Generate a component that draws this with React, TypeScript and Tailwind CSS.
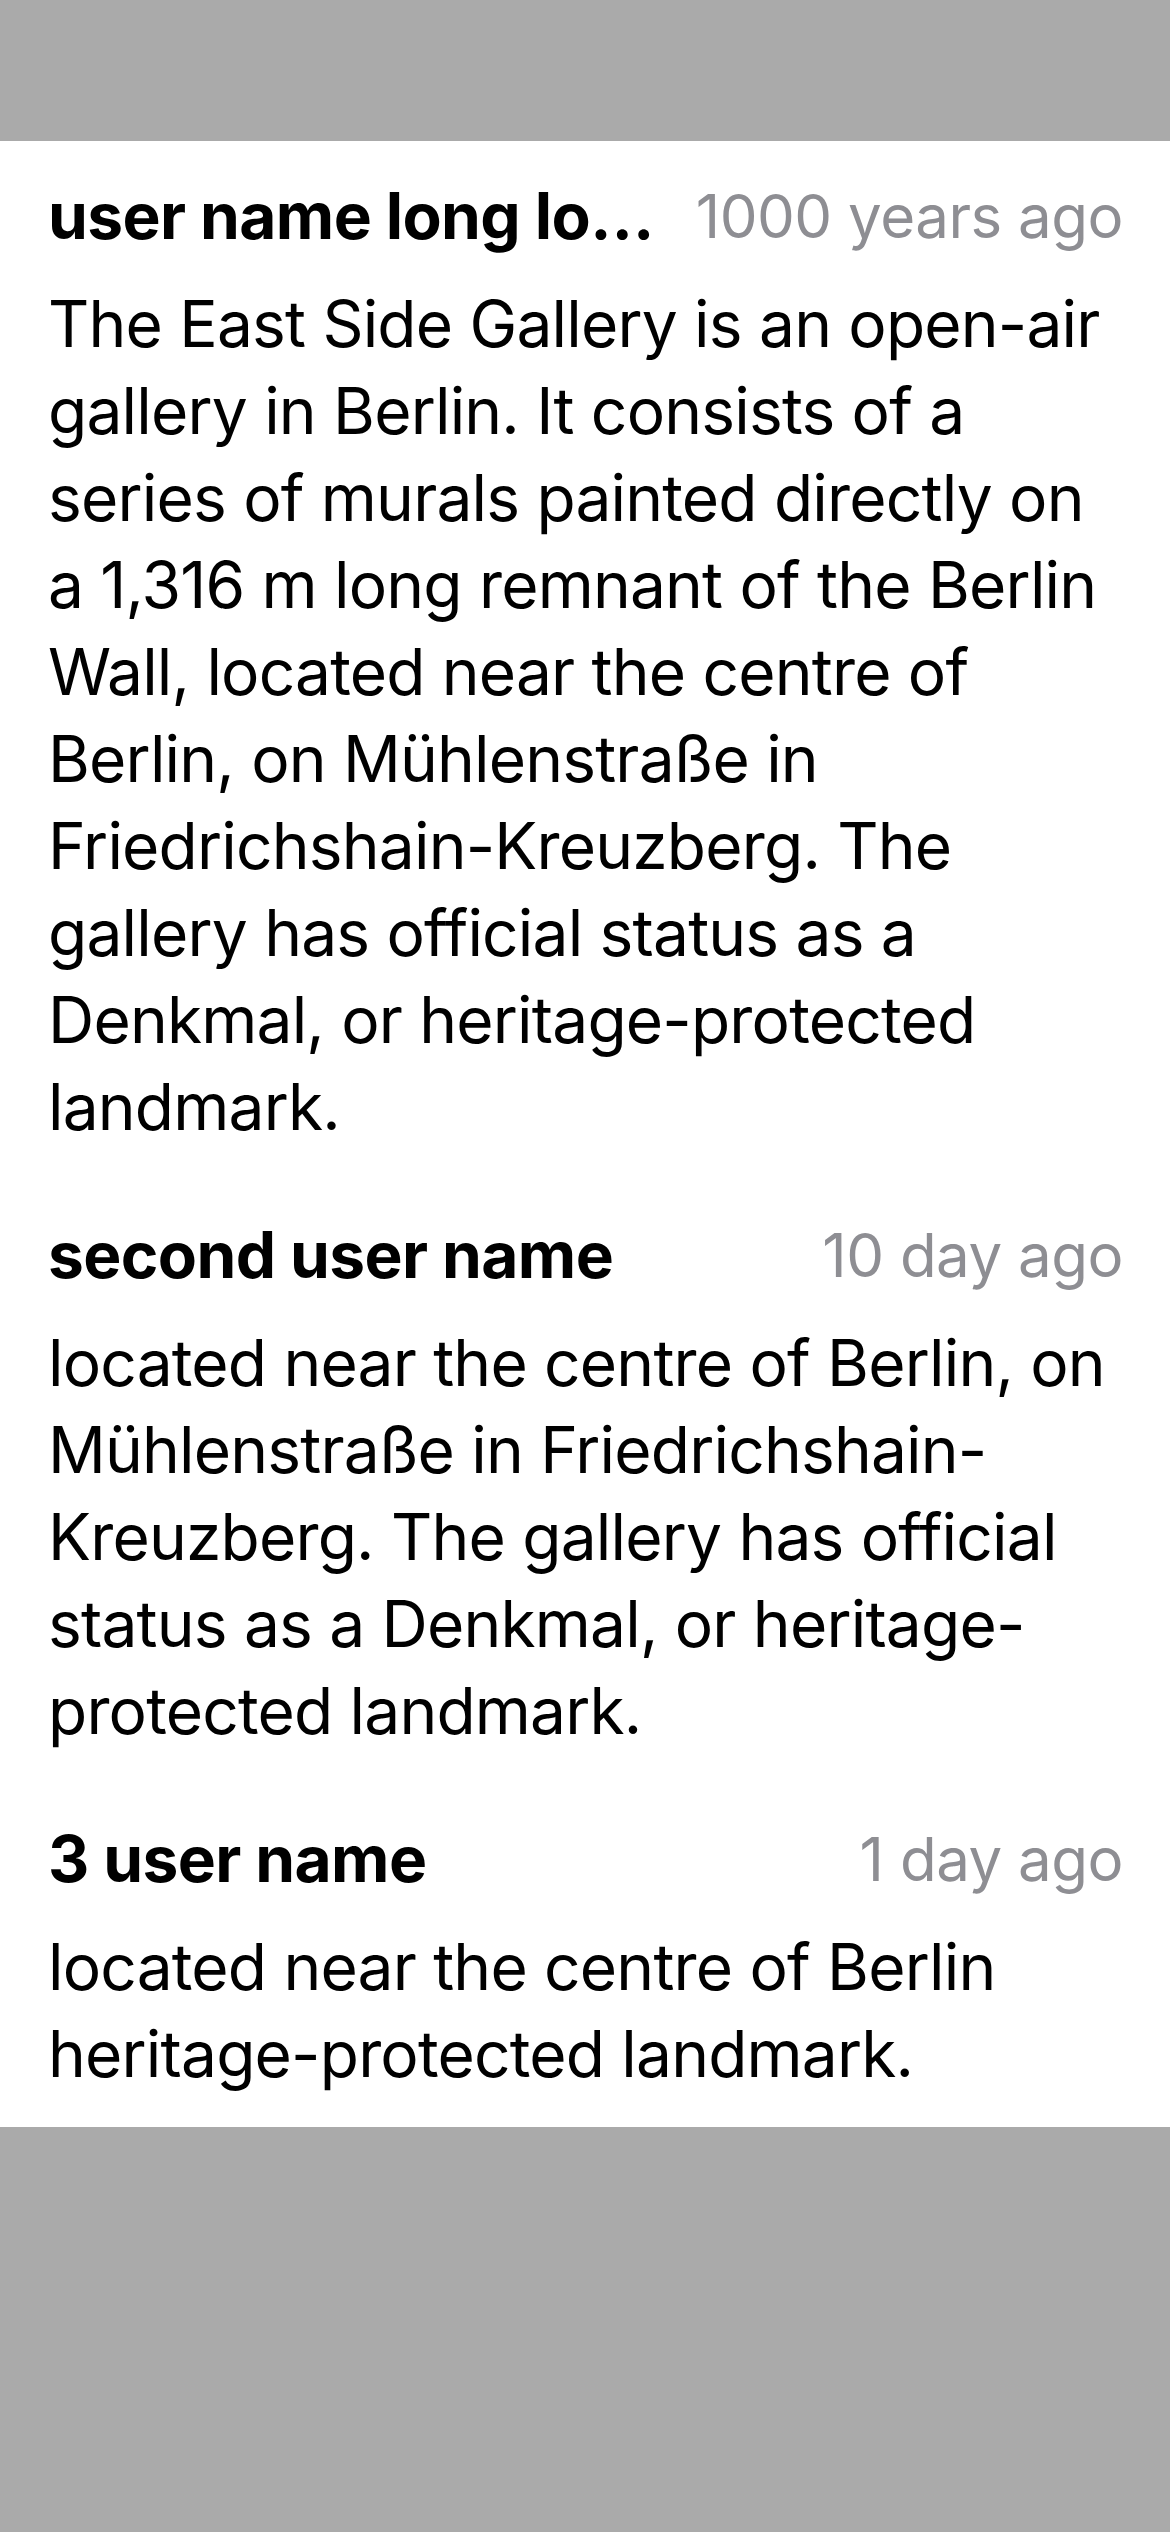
import React from "react";

interface Comment {
  id: number;
  user: string;
  time: string;
  text: string;
}

const comments: Comment[] = [
  {
    id: 1,
    user: "user name long long long long long name",
    time: "1000 years ago",
    text: "The East Side Gallery is an open-air gallery in Berlin. It consists of a series of murals painted directly on a 1,316 m long remnant of the Berlin Wall, located near the centre of Berlin, on Mühlenstraße in Friedrichshain-Kreuzberg. The gallery has official status as a Denkmal, or heritage-protected landmark.",
  },
  {
    id: 2,
    user: "second user name",
    time: "10 day ago",
    text: "located near the centre of Berlin, on Mühlenstraße in Friedrichshain-Kreuzberg. The gallery has official status as a Denkmal, or heritage-protected landmark.",
  },
  {
    id: 3,
    user: "3 user name",
    time: "1 day ago",
    text: "located near the centre of Berlin heritage-protected landmark.",
  },
];

function CommentRow({ comment }: { comment: Comment }) {
  return (
    <div className="pl-12 pr-[47px] pt-[39px] pb-[30px]">
      <div className="flex items-center justify-between gap-[30px] h-[72px]">
        <span className="truncate min-w-0 py-1 text-[64px] leading-[72px] font-bold tracking-[-0.6px] text-black">
          {comment.user}
        </span>
        <span className="shrink-0 text-[60px] leading-[72px] text-[#8e8e93] tracking-[-0.5px]">
          {comment.time}
        </span>
      </div>
      <p className="mt-[28px] text-[64px] leading-[87px] text-black tracking-[-0.8px]">{comment.text}</p>
    </div>
  );
}

export default function App() {
  return (
    <div
      className="min-h-screen bg-[#aaaaaa] pt-[141px]"
      style={{ fontFamily: "Inter, 'Noto Sans', sans-serif" }}
    >
      <div className="bg-white">
        {comments.map((c) => (
          <CommentRow key={c.id} comment={c} />
        ))}
      </div>
    </div>
  );
}
